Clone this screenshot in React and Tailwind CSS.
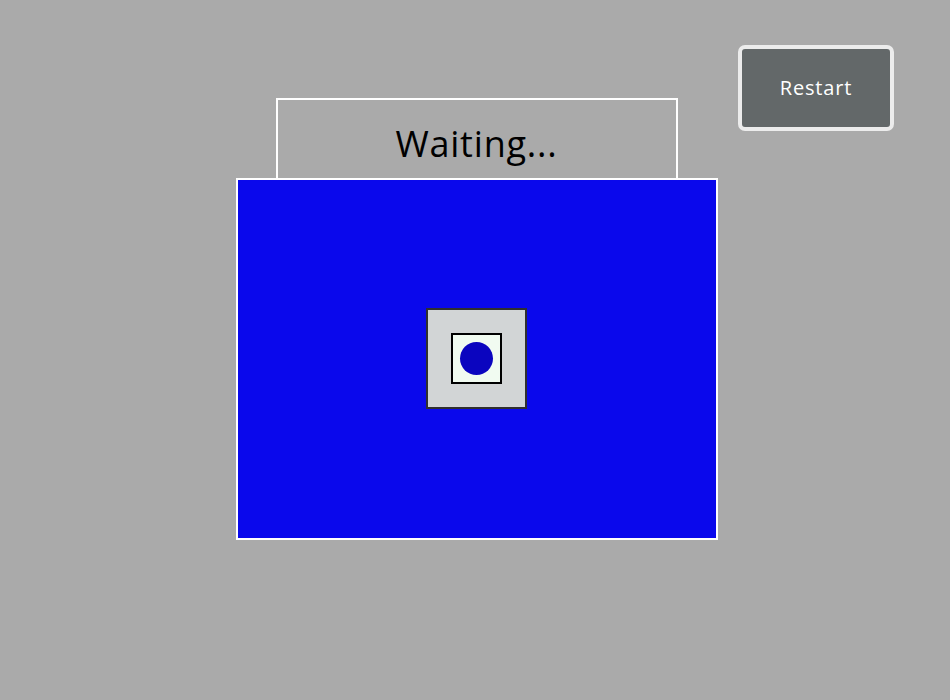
import React from 'react';

const App = () => {
  return (
    <div
      className="relative w-[950px] h-[700px] bg-[#aaaaaa] overflow-hidden"
      style={{ fontFamily: '"Open Sans", "DejaVu Sans", sans-serif' }}
    >
      {/* Restart button */}
      <button className="absolute left-[738px] top-[45px] w-[156px] h-[86px] rounded-[7px] border-4 border-[#ececec] bg-[#636869] text-white text-[20px] tracking-[0.8px] flex items-center justify-center">
        Restart
      </button>

      {/* Board */}
      <div className="flex flex-col items-center pt-[98px] pl-[3px]">
        <div className="w-[402px] h-[80px] border-2 border-b-0 border-white flex items-center justify-center pt-[10px]">
          <span className="text-[36px] text-black tracking-[0.8px]">Waiting...</span>
        </div>
        <div className="w-[482px] h-[362px] border-2 border-white bg-[#0a08ec] flex flex-col items-center pt-[128px]">
          <div className="w-[101px] h-[101px] border-2 border-[#2f2f2f] bg-[#d2d5d6] flex items-center justify-center">
            <div className="w-[51px] h-[51px] border-2 border-black bg-[#f1fbf1] flex items-center justify-center">
              <div className="w-[33px] h-[33px] rounded-full bg-[#0b05bf]" />
            </div>
          </div>
        </div>
      </div>
    </div>
  );
};

export default App;
